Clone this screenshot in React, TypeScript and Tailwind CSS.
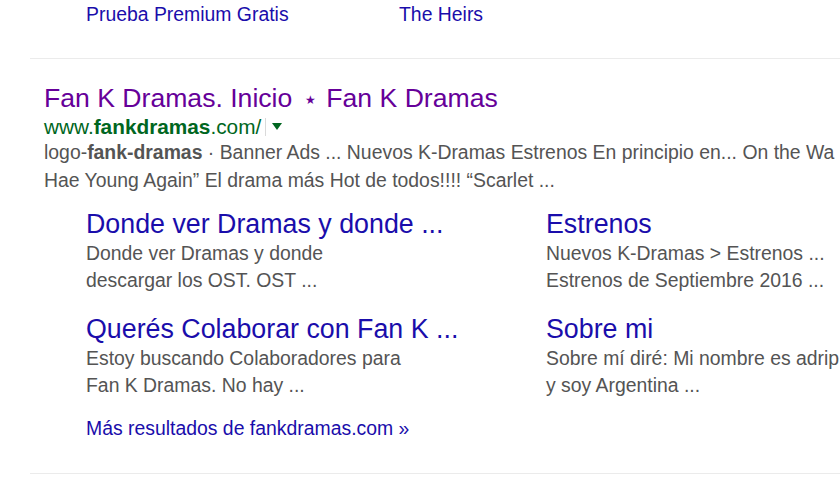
import React from "react";

const sitelinks = [
  {
    title: "Donde ver Dramas y donde ...",
    lines: ["Donde ver Dramas y donde", "descargar los OST. OST ..."],
  },
  {
    title: "Estrenos",
    lines: ["Nuevos K-Dramas > Estrenos ...", "Estrenos de Septiembre 2016 ..."],
  },
  {
    title: "Querés Colaborar con Fan K ...",
    lines: ["Estoy buscando Colaboradores para", "Fan K Dramas. No hay ..."],
  },
  {
    title: "Sobre mi",
    lines: ["Sobre mí diré: Mi nombre es adrip", "y soy Argentina ..."],
  },
];

export default function App() {
  return (
    <div className="w-[840px] h-[480px] overflow-hidden bg-white font-['Liberation_Sans',Arial,sans-serif] whitespace-nowrap">
      {/* previous result sitelinks */}
      <div className="flex pl-[86px] h-[28px] leading-[28px] text-[19.4px] text-[#1a0dab]">
        <span className="w-[313px]">Prueba Premium Gratis</span>
        <span>The Heirs</span>
      </div>

      <div className="ml-[30px] mt-[30px] h-px bg-[#ebebeb]" />

      {/* result */}
      <div className="pl-[44px] pt-[23px]">
        <div className="flex items-center h-[32px] leading-[32px] text-[26.6px] text-[#660099]">
          <span>Fan K Dramas. Inicio</span>
          <span className="ml-[13px] mr-[10px] mt-[3px] text-[12px] leading-none">★</span>
          <span>Fan K Dramas</span>
        </div>
        <div className="flex items-center h-[23px] mt-px text-[20.8px] text-[#006621]">
          <span>
            www.<b>fankdramas</b>.com/
          </span>
          <span className="ml-[4px] w-px h-[18px] bg-[#dadada]" />
          <span className="ml-[6px] w-0 h-0 border-l-[5px] border-r-[5px] border-t-[7px] border-l-transparent border-r-transparent border-t-[#006621]" />
        </div>
        <div className="text-[19.4px] leading-[28px] text-[#545454]">
          <div>
            logo-<b>fank-dramas</b> · Banner Ads ... Nuevos K-Dramas Estrenos En principio en... On the Wa
          </div>
          <div>Hae Young Again” El drama más Hot de todos!!!! “Scarlet ...</div>
        </div>

        {/* sitelinks */}
        <div className="grid grid-cols-[460px_1fr] pl-[42px] mt-[14px] gap-y-[19px]">
          {sitelinks.map((s) => (
            <div key={s.title}>
              <div className="h-[32px] leading-[32px] text-[26.8px] text-[#1a0dab]">{s.title}</div>
              <div className="text-[19.4px] leading-[27px] text-[#545454]">
                {s.lines.map((l) => (
                  <div key={l}>{l}</div>
                ))}
              </div>
            </div>
          ))}
        </div>
        <div className="pl-[42px] mt-[15px] h-[28px] leading-[28px] text-[19.4px] text-[#1a0dab]">
          Más resultados de fankdramas.com »
        </div>
      </div>

      <div className="ml-[30px] mt-[31px] h-px bg-[#ebebeb]" />
    </div>
  );
}
